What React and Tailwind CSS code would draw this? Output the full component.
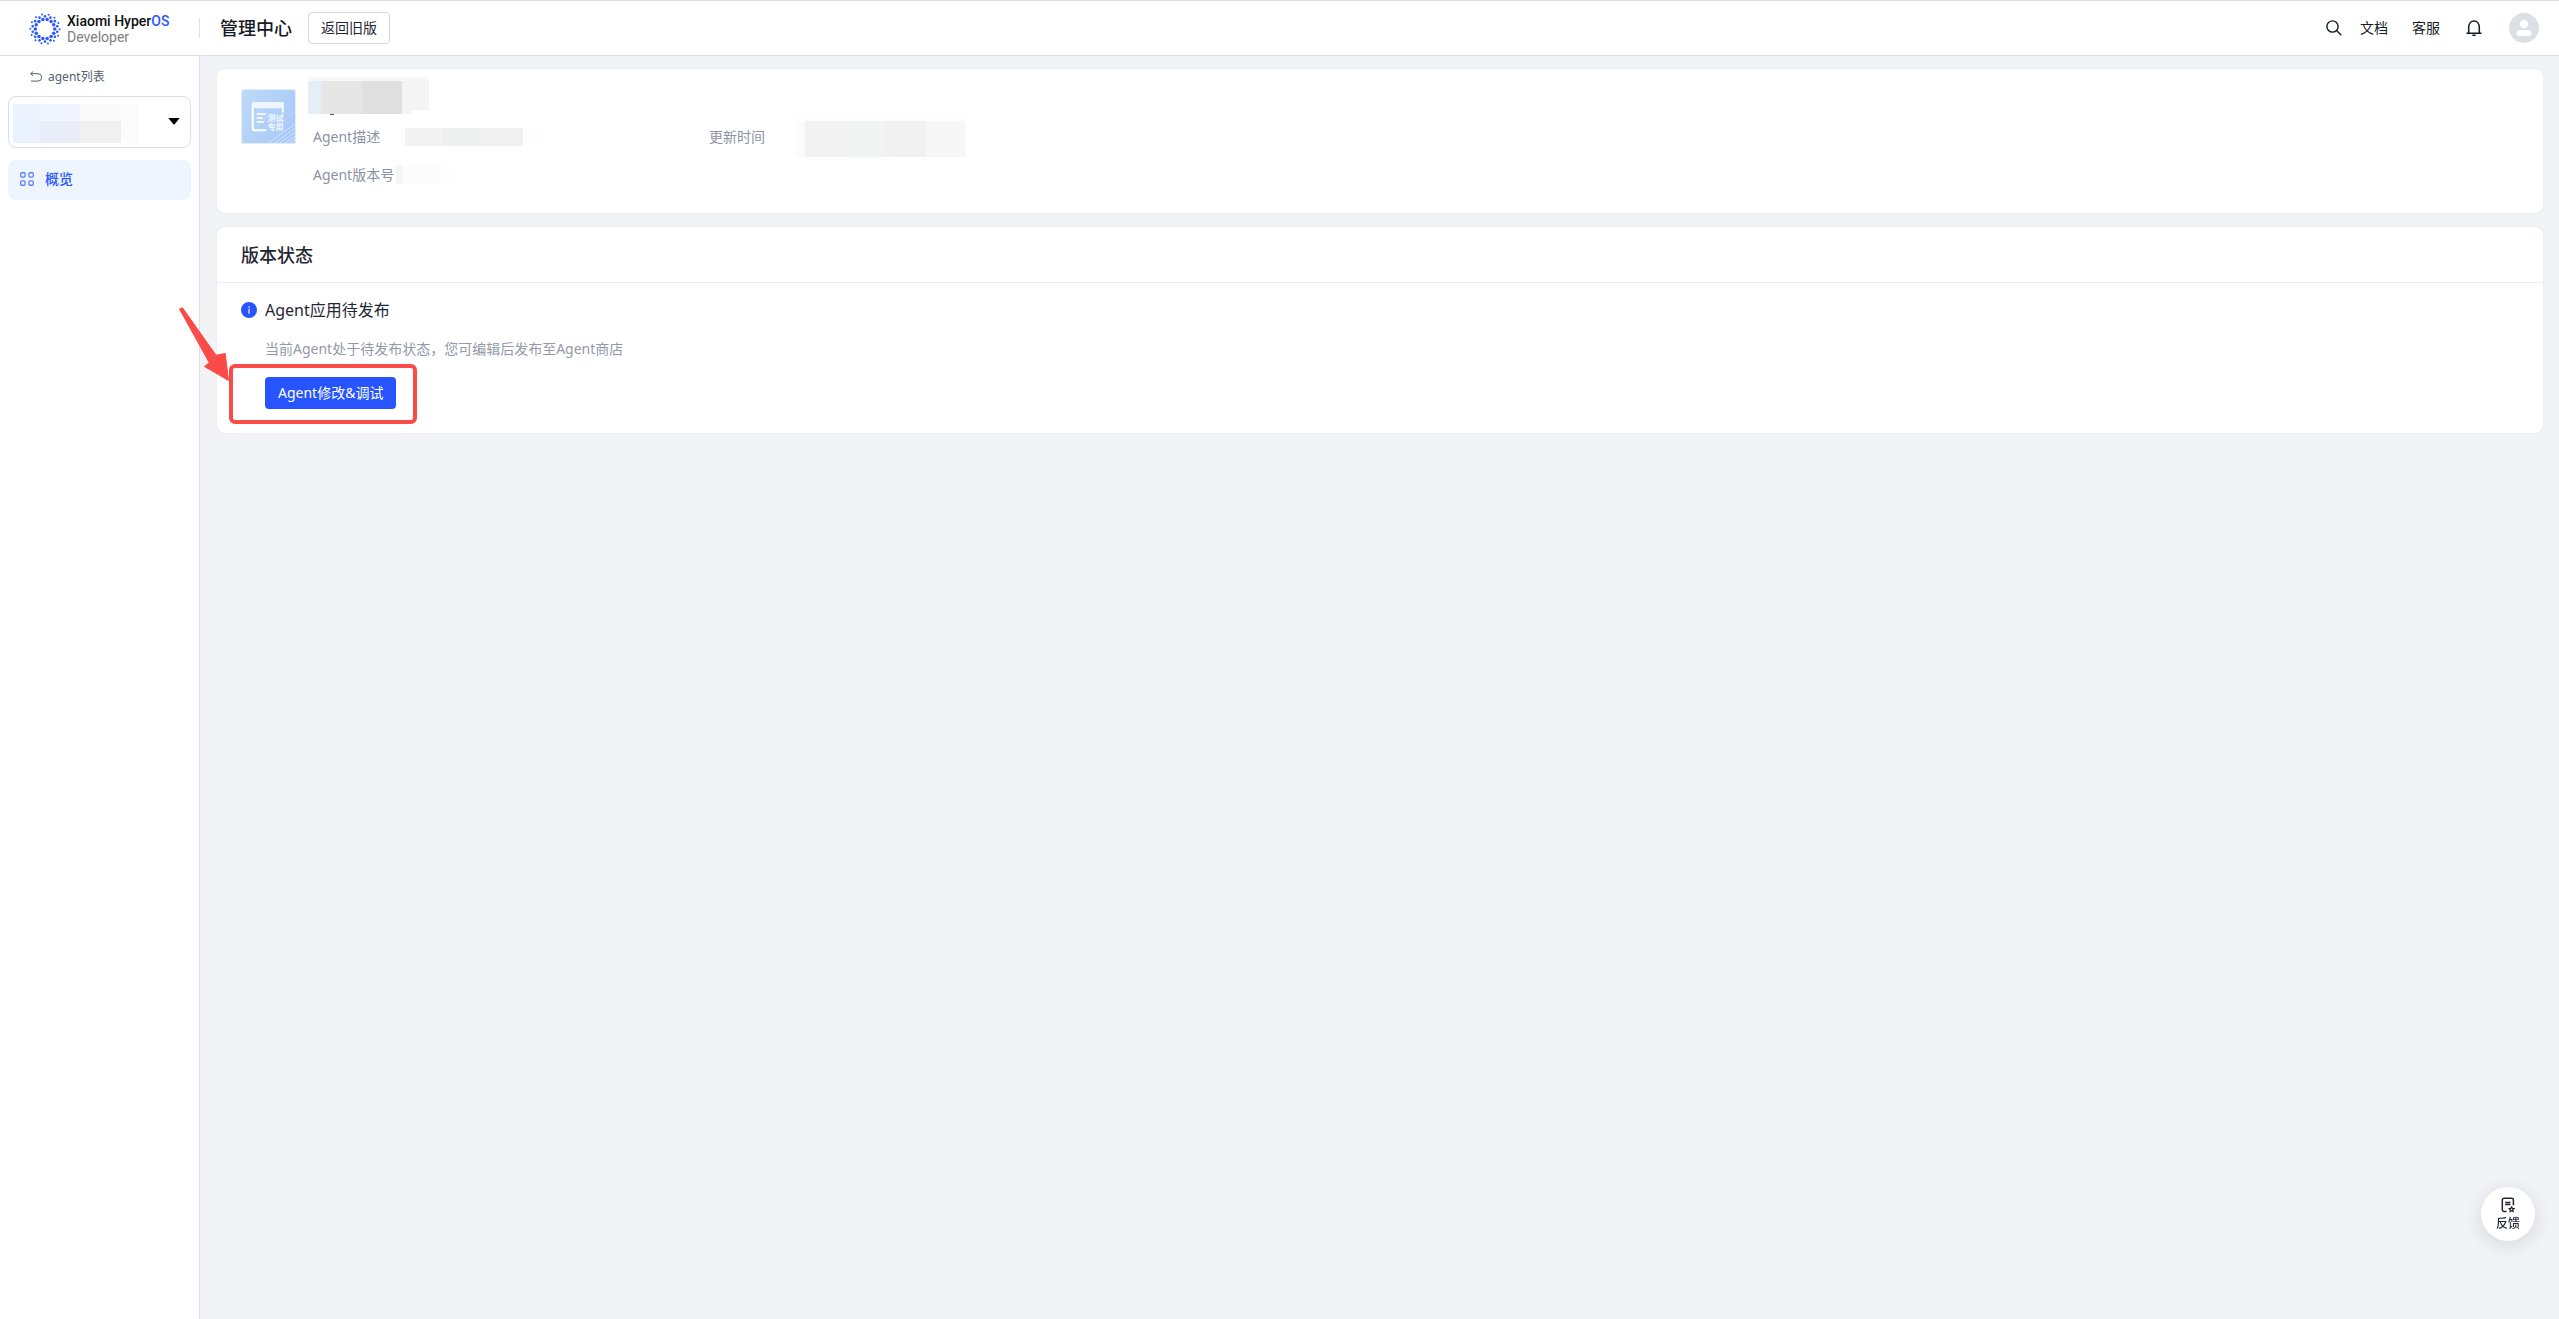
import { useState } from "react";

// Colour rows of the redacted values
const NAME_CELLS = ["w-[14px] bg-[#e6edf7]", "w-10 bg-[#e6e6e6]", "w-10 bg-[#dfdfdf]", "w-[27px] bg-[#f4f4f4]"];
const NAME_EDGE_CELLS = ["w-[14px] bg-[#e6edf7]", "w-10 bg-[#e6e6e6]", "w-10 bg-[#dfdfdf]", "w-[9px] bg-[#f4f4f4]"];
const DESC_CELLS = ["w-[38px] bg-[#f3f3f3]", "w-[38px] bg-[#eef0f0]", "w-[42px] bg-[#f0f0f0]", "w-[17px] bg-[#fefefe]"];
const VERSION_CELLS = ["w-[6px] bg-[#f5f5f5]", "w-10 bg-[#fcfcfc]", "w-[14px] bg-[#fefefe]"];
const TIME_CELLS = [
  "w-[10px] bg-[#fcfcfc]",
  "w-[41px] bg-[#f2f2f2]",
  "w-[39px] bg-[#f2f4f4]",
  "w-[41px] bg-[#f1f1f1]",
  "w-10 bg-[#f7f7f7]",
];
const SELECT_TOP = ["w-[27px] bg-[#edf4ff]", "w-10 bg-[#f0f5fe]", "w-[41px] bg-[#f9f9f9]", "w-[17px] bg-[#fcfcfc]"];
const SELECT_BOTTOM = ["w-[27px] bg-[#eaf2ff]", "w-10 bg-[#e9edf7]", "w-[41px] bg-[#f0f0f0]", "w-[17px] bg-[#fcfcfc]"];

function Mosaic({ cells, height }) {
  return (
    <div className={`flex ${height}`} aria-hidden="true">
      {cells.map((cell, i) => (
        <span key={i} className={cell} />
      ))}
    </div>
  );
}

function LogoMark() {
  const rings = [
    { r: 9.7, size: 1.75, shift: 0 },
    { r: 12.6, size: 1.3, shift: 0.5 },
    { r: 14.7, size: 1, shift: 0.05 },
  ];
  const count = 14;
  return (
    <svg className="size-8" viewBox="-16 -16 32 32" fill="#2b57ff" aria-hidden="true">
      {rings.map((ring) =>
        Array.from({ length: count }, (_, i) => {
          const angle = ((i + ring.shift) / count) * Math.PI * 2;
          return (
            <circle
              key={`${ring.r}-${i}`}
              cx={Math.cos(angle) * ring.r}
              cy={Math.sin(angle) * ring.r}
              r={ring.size}
            />
          );
        })
      )}
    </svg>
  );
}

function AgentIcon() {
  return (
    <svg className="size-[55px] shrink-0" viewBox="0 0 54 54" role="img" aria-label="测试专用">
      <defs>
        <linearGradient id="agentBg" x1="0" y1="0" x2="1" y2="0.6">
          <stop offset="0" stopColor="#bfdaf7" />
          <stop offset="1" stopColor="#a9caf8" />
        </linearGradient>
        <clipPath id="agentClip">
          <rect width="54" height="54" rx="3" />
        </clipPath>
      </defs>
      <g clipPath="url(#agentClip)">
        <rect width="54" height="54" fill="url(#agentBg)" />
        <g stroke="#d7e7fc" strokeWidth="0.8">
          <path d="M24 55 55 33M29 56 55 37M35 55 55 41M39 56 55 45M45 55 55 48" />
          <path d="M38 35 55 20" strokeOpacity="0.5" />
        </g>
        <path d="M26 25h16v17H26z" fill="#b0cff8" />
        <path d="M25 40.500H12.500a1 1 0 0 1-1-1V15a1 1 0 0 1 1-1H41v9" fill="none" stroke="#fff" strokeWidth="2" />
        <path d="M11 13.500h31V19H11z" fill="#eff6ff" />
        <path d="M15.500 24.500h9M15.500 28.500h6M15.500 32.500h7" stroke="#eff6ff" strokeWidth="2" />
        <g fill="#eff6ff" fontSize="8" fontWeight="700" fontFamily="'Noto Sans CJK SC', sans-serif">
          <text x="26" y="31">测试</text>
          <text x="26" y="40.500">专用</text>
        </g>
      </g>
      <rect x="0.500" y="0.500" width="53" height="53" rx="3" fill="none" stroke="#e3edfa" />
    </svg>
  );
}

function Header() {
  return (
    <header className="flex h-14 items-center border-t border-b border-t-[#dcdcdc] border-b-[#dfe0e4] bg-white pr-5 pb-px">
      <a href="#home" className="flex w-[199px] items-center gap-[6px] pt-[2px] pl-[29px]">
        <LogoMark />
        <span className="flex flex-col font-[Roboto] text-sm leading-4">
          <span className="font-medium whitespace-nowrap text-[#111]">
            Xiaomi Hyper<span className="text-[#2b57ff]">OS</span>
          </span>
          <span className="text-[#808080]">Developer</span>
        </span>
      </a>
      <span className="h-5 w-px bg-[#dfe2e8]" />
      <h1 className="ml-5 text-lg font-medium text-[#141a24]">管理中心</h1>
      <button type="button" className="ml-4 h-8 rounded border border-[#d5d7db] px-3 text-sm text-[#1f2733]">
        返回旧版
      </button>

      <nav className="ml-auto flex items-center text-sm text-[#141a24]">
        <button type="button" aria-label="搜索">
          <svg className="size-4" viewBox="0 0 16 16" fill="none" stroke="currentColor" strokeWidth="1.4">
            <circle cx="6.500" cy="6.500" r="5.600" />
            <path d="m10.600 10.600 4.600 4.600" />
          </svg>
        </button>
        <a href="#docs" className="ml-[18px]">文档</a>
        <a href="#support" className="ml-6">客服</a>
        <button type="button" aria-label="通知" className="ml-[26px]">
          <svg className="size-4" viewBox="0 0 16 16" fill="none" stroke="currentColor" strokeWidth="1.500">
            <path d="M.5 13.200h15M2.700 13.200V7.500C2.700 4 4.600 1 8 1s5.300 3 5.300 6.500v5.700" />
            <path d="M6.300 15.300h3.400" />
          </svg>
        </button>
        <button type="button" aria-label="账号" className="ml-[27px]">
          <svg className="size-[30px]" viewBox="0 0 30 30">
            <circle cx="15" cy="15" r="15" fill="#dce0e5" />
            <circle cx="15" cy="11" r="4.200" fill="#fff" />
            <rect x="7.500" y="17" width="15" height="6" rx="3" fill="#fff" />
          </svg>
        </button>
      </nav>
    </header>
  );
}

function Sidebar() {
  const [agent, setAgent] = useState("");

  return (
    <aside className="w-[200px] shrink-0 border-r border-[#dfe0e6] bg-white px-2 pt-3">
      <a href="#agents" className="ml-[22px] flex h-[18px] items-center gap-[6px] text-xs text-[#566073]">
        <svg className="size-3" viewBox="0 0 12 12" fill="none" stroke="currentColor" strokeWidth="1">
          <path d="M3.200.5.700 2.700l2.500 2.200M.7 2.700H8a3.700 3.700 0 0 1 0 7.400H1" />
        </svg>
        agent列表
      </a>

      <div className="relative mt-[10px]">
        <select
          aria-label="agent"
          value={agent}
          onChange={(e) => setAgent(e.target.value)}
          className="block h-[52px] w-full appearance-none rounded-lg border border-[#dcdee9] bg-white"
        >
          <option value=""></option>
        </select>
        <div className="pointer-events-none absolute top-2 left-[5px]">
          <Mosaic cells={SELECT_TOP} height="h-[17px]" />
          <Mosaic cells={SELECT_BOTTOM} height="h-[22px]" />
        </div>
        <svg className="pointer-events-none absolute top-[22px] right-[11px] h-[7px] w-3" viewBox="0 0 12 7">
          <path d="M.3 0h11.400L6.600 6.200a.8.8 0 0 1-1.200 0z" />
        </svg>
      </div>

      <a
        href="#overview"
        className="mt-3 flex h-10 items-center gap-[11px] rounded-lg bg-[#eef5ff] pb-[2px] pl-3 text-sm font-medium text-[#2b57ff]"
      >
        <svg className="size-[14px]" viewBox="0 0 13 13" fill="none" stroke="#5c7fff" strokeWidth="1.200">
          <rect x=".7" y=".7" width="4" height="4" rx="1" />
          <rect x="8.300" y=".7" width="4" height="4" rx="1" />
          <rect x=".7" y="8.300" width="4" height="4" rx="1" />
          <rect x="8.300" y="8.300" width="4" height="4" rx="1" />
        </svg>
        概览
      </a>
    </aside>
  );
}

function AgentCard() {
  return (
    <section className="flex h-36 rounded-lg bg-white pt-2 pl-6 shadow-[0_0_1px_#d5d7dc]">
      <div className="pt-3">
        <AgentIcon />
      </div>
      <div className="ml-3">
        <div className="h-1 w-[121px] bg-[#f8f8f8]" />
        <Mosaic cells={NAME_CELLS} height="h-[29px]" />
        <Mosaic cells={NAME_EDGE_CELLS} height="h-1" />
        <div className="ml-[22px] h-px w-1 bg-[#555]" />
        <dl className="ml-[5px] flex text-sm leading-5 text-[#8b93a3]">
          <div className="w-[396px]">
            <div className="mt-3 flex items-center">
              <dt className="w-[92px]">Agent描述</dt>
              <dd><Mosaic cells={DESC_CELLS} height="h-[18px]" /></dd>
            </div>
            <div className="mt-[18px] flex items-start">
              <dt className="w-[83px]">Agent版本号</dt>
              <dd><Mosaic cells={VERSION_CELLS} height="h-[19px]" /></dd>
            </div>
          </div>
          <div className="flex items-start">
            <dt className="mt-3 w-[86px]">更新时间</dt>
            <dd>
              <div className="h-[6px] w-[171px] bg-[#fdfdfd]" />
              <Mosaic cells={TIME_CELLS} height="h-9" />
            </dd>
          </div>
        </dl>
      </div>
    </section>
  );
}

function StatusCard() {
  return (
    <section className="mt-[14px] rounded-lg bg-white pb-6 shadow-[0_0_1px_#d5d7dc]">
      <h2 className="flex h-14 items-center border-b border-[#ecedf0] pl-6 text-lg font-medium text-[#1f2733]">
        版本状态
      </h2>
      <div className="pt-[15px] pl-6">
        <div className="flex items-center gap-2">
          <svg className="size-4" viewBox="0 0 16 16" aria-hidden="true">
            <circle cx="8" cy="8" r="8" fill="#2754ff" />
            <path d="M7.300 4.200h1.500v1.500H7.300zM7.300 6.800h1.500v5H7.300z" fill="#c9d5ff" />
          </svg>
          <h3 className="text-base text-[#1f2733]">Agent应用待发布</h3>
        </div>
        <p className="mt-[17px] ml-6 text-sm leading-5 text-[#9299a8]">
          当前Agent处于待发布状态，您可编辑后发布至Agent商店
        </p>
        <div className="relative mt-[18px] ml-6 w-fit">
          <button type="button" className="block h-8 rounded bg-[#2754ff] px-[13px] text-sm text-white">
            Agent修改&amp;调试
          </button>
          {/* Callout around the action */}
          <div className="pointer-events-none absolute -top-[13px] -right-[21px] -bottom-[15px] -left-9 rounded-md border-4 border-[#f94c48]" />
          <svg
            className="pointer-events-none absolute -top-[72px] -left-[87px] h-[78px] w-[54px]"
            viewBox="0 0 54 78"
            fill="#f94c48"
            stroke="#f94c48"
            strokeLinejoin="round"
            aria-hidden="true"
          >
            <path d="M1.500 4 4.500 2.800 38 50.200 47.200 48.500 50.500 75.500 26.500 61.500 31.300 57.800z" />
          </svg>
        </div>
      </div>
    </section>
  );
}

export default function App() {
  return (
    <div className="flex min-h-screen flex-col bg-[#f2f3f7] font-['Noto_Sans','Noto_Sans_CJK_SC',sans-serif]">
      <Header />
      <div className="flex flex-1">
        <Sidebar />
        <main className="min-w-0 flex-1 pt-[13px] pr-4 pl-[17px]">
          <AgentCard />
          <StatusCard />
        </main>
      </div>

      {/* Floating feedback button */}
      <button
        type="button"
        className="fixed right-6 bottom-[78px] flex size-[54px] flex-col items-center justify-center gap-[3px] rounded-full bg-white text-xs leading-4 font-medium text-[#1f2733] shadow-[0_4px_20px_rgba(0,0,0,0.12)]"
      >
        <svg className="h-4 w-[14px]" viewBox="0 0 14 16" fill="none" stroke="currentColor" strokeWidth="1.500">
          <path d="M5.500 14.500H3a1.700 1.700 0 0 1-1.700-1.700V3A1.700 1.700 0 0 1 3 1.300h7.700A1.700 1.700 0 0 1 12.400 3v5.200M4.200 5.400h5.200M4.200 7.600h5.200" />
          <path
            d="m10.600 9.900.8 1.500 1.600.2-1.200 1.200.3 1.600-1.500-.7-1.500.7.300-1.600-1.200-1.200 1.600-.2z"
            strokeWidth="1.200"
          />
        </svg>
        反馈
      </button>
    </div>
  );
}
